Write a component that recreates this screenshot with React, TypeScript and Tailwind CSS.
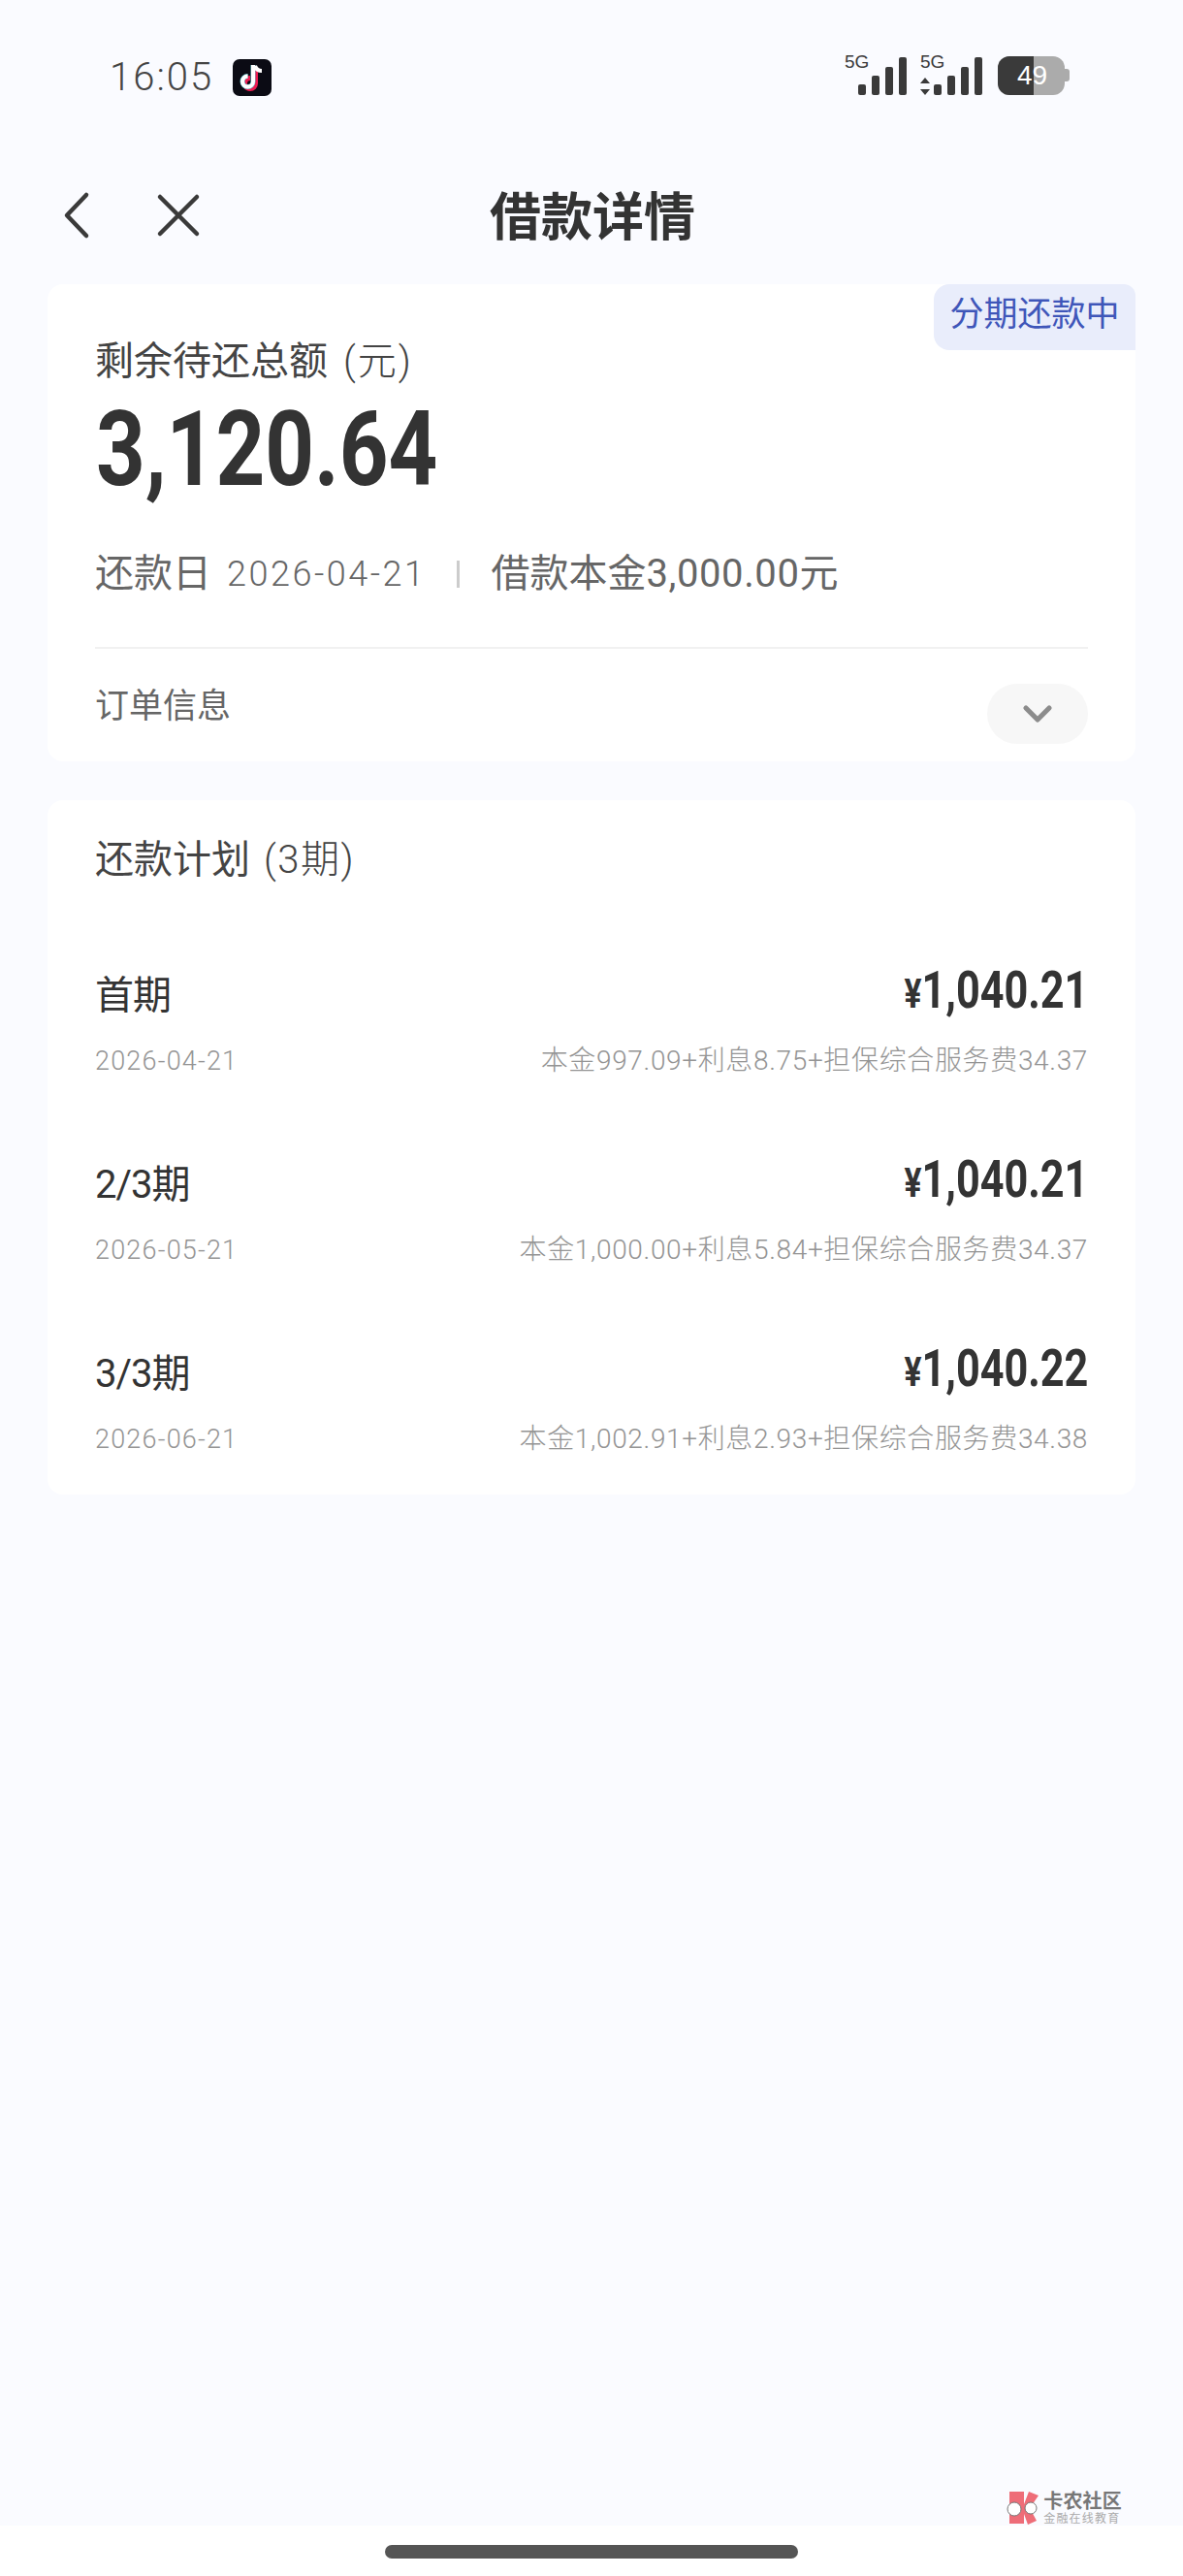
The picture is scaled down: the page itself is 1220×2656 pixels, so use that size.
import { ChevronDown } from "lucide-react";

const cjk = "font-['Roboto','Noto_Sans_CJK_SC',sans-serif]";
const din = "font-['Roboto',sans-serif]";

type PlanRow = { name: string; date: string; amount: string; detail: string };

const planRows: PlanRow[] = [
  { name: "首期", date: "2026-04-21", amount: "1,040.21", detail: "本金997.09+利息8.75+担保综合服务费34.37" },
  { name: "2/3期", date: "2026-05-21", amount: "1,040.21", detail: "本金1,000.00+利息5.84+担保综合服务费34.37" },
  { name: "3/3期", date: "2026-06-21", amount: "1,040.22", detail: "本金1,002.91+利息2.93+担保综合服务费34.38" },
];

function Signal({ arrows }: { arrows?: boolean }) {
  return (
    <svg width="66" height="44" viewBox="0 0 66 44" fill="#3a3a3a" className="-mt-[4px] block">
      <text x="1" y="16" fontSize="19" fontFamily="Liberation Sans" fill="#3a3a3a">5G</text>
      {arrows && <path d="M6 26l5 6H1zM6 44l5-6H1z" />}
      <rect x="15" y="33" width="8" height="11" rx="2" />
      <rect x="29" y="24" width="8" height="20" rx="2" />
      <rect x="43" y="15" width="8" height="29" rx="2" />
      <rect x="57" y="5" width="8" height="39" rx="2" />
    </svg>
  );
}

function StatusBar() {
  return (
    <div className="flex h-[160px] items-start justify-between pl-[113px] pr-[117px] pt-[58px]">
      <div className="flex items-center gap-[20px]">
        <span className={`${cjk} text-[40px] leading-[44px] font-light tracking-[2px] text-[#444]`}>16:05</span>
        <svg width="40" height="38" viewBox="0 0 40 38" className="block">
          <rect width="40" height="38" rx="7" fill="#0b0b14" />
          <path d="M22 7v17a5.5 5.5 0 1 1-5.5-5.5" fill="none" stroke="#ee1d52" strokeWidth="5" transform="translate(1.5 1)" />
          <path d="M22 7v17a5.5 5.5 0 1 1-5.5-5.5" fill="none" stroke="#69c9d0" strokeWidth="5" transform="translate(-1 -1)" />
          <path d="M21 6v17a5.5 5.5 0 1 1-5.5-5.5" fill="none" stroke="#fff" strokeWidth="4" />
          <path d="M23 7c1 3 3 5 7 5" fill="none" stroke="#fff" strokeWidth="4" />
        </svg>
      </div>
      <div className="flex items-start">
        <Signal />
        <div className="w-[12px]" />
        <Signal arrows />
        <div className="relative ml-[15px] flex h-[40px] w-[69px] items-center overflow-hidden rounded-[12px] bg-[#ababab]">
          <div className="h-full w-[37px] bg-[#3a3a3a]" />
          <span className="absolute left-[20px] text-[28px] leading-[32px] font-['Liberation_Sans',sans-serif] text-white">49</span>
        </div>
        <div className="mt-[13px] h-[13px] w-[5px] rounded-r-[3px] bg-[#ababab]" />
      </div>
    </div>
  );
}

function NavBar() {
  return (
    <div className="relative flex h-[133px] items-start pl-[64px] pt-[37px]">
      <svg width="32" height="50" viewBox="0 0 32 50" fill="none" stroke="#3a3a3a" strokeWidth="4.5" strokeLinecap="round" strokeLinejoin="round">
        <path d="M25 4 5 25l20 21" />
      </svg>
      <svg width="46" height="46" viewBox="0 0 46 46" fill="none" stroke="#3a3a3a" strokeWidth="4.5" strokeLinecap="round" className="ml-[65px] mt-[2px]">
        <path d="M4 4l38 38M42 4 4 42" />
      </svg>
      <h1 className={`${cjk} absolute inset-x-0 top-[32px] pl-[2px] text-center text-[53px] leading-[66px] font-bold text-[#333]`}>借款详情</h1>
    </div>
  );
}

function SummaryCard() {
  return (
    <section className="relative h-[492px] rounded-[16px] bg-white px-[49px] pt-[52px]">
      <span className={`${cjk} absolute right-0 top-0 flex h-[68px] w-[208px] items-center justify-center rounded-bl-[16px] rounded-tl-[16px] rounded-tr-[12px] bg-[#e9edfb] pb-[3px] text-[35px] text-[#3f56b9]`}>
        分期还款中
      </span>
      <p className={`${cjk} text-[40px] leading-[56px] text-[#444]`}>
        剩余待还总额<span className="ml-[16px] font-light tracking-[2px]">(元)</span>
      </p>
      <p className={`${din} mt-[2px] inline-block origin-left translate-x-[1px] scale-x-[0.82] text-[108px] leading-[120px] font-bold text-[#333]`}>3,120.64</p>
      <div className={`${cjk} mt-[41px] flex items-center text-[40px] leading-[56px] text-[#666]`}>
        <span>还款日</span>
        <span className="ml-[16px] text-[36px] font-light tracking-[2.5px]">2026-04-21</span>
        <span className="ml-[32px] h-[28px] w-[3px] bg-[#ccc]" />
        <span className="ml-[32px]">
          借款本金<span className="tracking-[0.6px]">3,000.00</span>元
        </span>
      </div>
      <div className="mt-[47px] h-[2px] bg-[#f1f1f1]" />
      <div className="mt-[36px] flex items-center justify-between">
        <span className={`${cjk} mb-[14px] text-[35px] leading-[48px] text-[#666]`}>订单信息</span>
        <span className="flex h-[62px] w-[104px] items-center justify-center rounded-full bg-[#f7f7f7]">
          <ChevronDown size={48} strokeWidth={2.6} color="#8c8c8c" />
        </span>
      </div>
    </section>
  );
}

function PlanCard() {
  return (
    <section className="mt-[40px] h-[716px] rounded-[16px] bg-white px-[49px] pt-[34px]">
      <h2 className={`${cjk} text-[40px] leading-[56px] text-[#444]`}>
        还款计划<span className="ml-[14px] font-light tracking-[1.5px]">(3期)</span>
      </h2>
      <div className="mt-[112px] flex flex-col gap-[195px]">
        {planRows.map((row) => (
          <div key={row.date} className="relative h-0">
            <div className="absolute inset-x-0 -top-[28px] flex items-center justify-between">
              <span className={`${cjk} text-[40px] leading-[56px] tracking-[-1px] text-[#333]`}>{row.name}</span>
              <span className={`${din} -mt-[8px] origin-right scale-x-[0.8] text-[54px] leading-[56px] font-bold text-[#333]`}>
                <span className="text-[42px]">¥</span>
                {row.amount}
              </span>
            </div>
            <div className="absolute inset-x-0 top-[49px] flex items-center justify-between text-[#949494]">
              <span className={`${cjk} text-[27px] leading-[36px] font-light tracking-[1.2px]`}>{row.date}</span>
              <span className={`${cjk} text-[28px] leading-[36px] font-light tracking-[0.65px]`}>{row.detail}</span>
            </div>
          </div>
        ))}
      </div>
    </section>
  );
}

function Watermark() {
  return (
    <div className="absolute right-[63px] top-[2568px] flex items-center gap-[4px]">
      <svg width="36" height="36" viewBox="0 0 36 36">
        <path d="M5 1h15v13l5-13 10 4-9 13 7 13-9 4-4-11v10H5z" fill="#ee6d78" />
        <circle cx="10" cy="19" r="7" fill="#fff" stroke="#777" strokeWidth="1" />
        <circle cx="27" cy="18" r="6" fill="#fff" stroke="#777" strokeWidth="1" />
      </svg>
      <div className={`${cjk} flex flex-col`}>
        <span className="text-[20px] leading-[22px] font-bold tracking-[0.2px] text-[#777]">卡农社区</span>
        <span className="text-[12px] leading-[14px] tracking-[1.2px] text-[#aaa]">金融在线教育</span>
      </div>
    </div>
  );
}

export default function App() {
  return (
    <div className="relative flex h-[2656px] w-[1220px] flex-col overflow-hidden bg-[#fafbff]">
      <StatusBar />
      <NavBar />
      <main className="px-[49px]">
        <SummaryCard />
        <PlanCard />
      </main>
      <footer className="mt-auto flex h-[52px] justify-center bg-white pt-[20px]">
        <div className="h-[14px] w-[426px] rounded-full bg-[#555]" />
      </footer>
      <Watermark />
    </div>
  );
}
